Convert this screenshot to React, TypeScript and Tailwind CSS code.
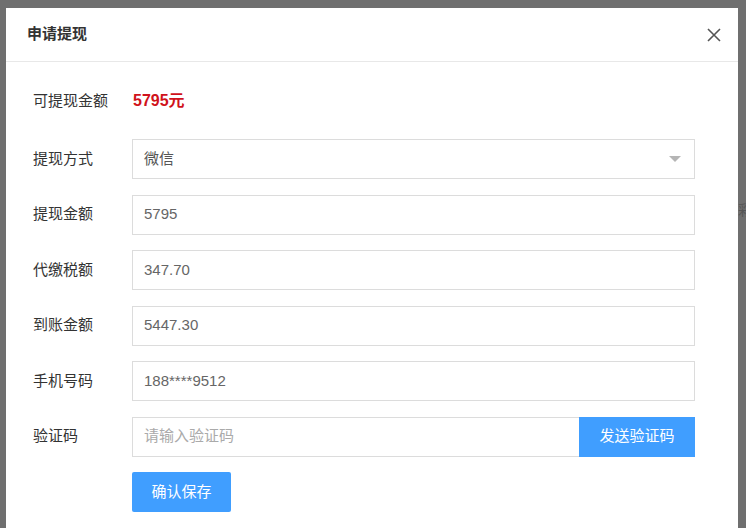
import React from "react";

const font = { fontFamily: '"Liberation Sans", "Noto Sans CJK SC", sans-serif' };

function Row({ label, children }: { label: string; children: React.ReactNode }) {
  return (
    <div className="flex items-center h-[40px]">
      <div className="w-[99px] shrink-0 text-[15px] text-[#333]">{label}</div>
      {children}
    </div>
  );
}

function Field({ value }: { value: string }) {
  return (
    <div className="w-[563px] h-[40px] border border-[#dcdcdc] flex items-center pl-[11px] text-[15px] text-[#666]">
      {value}
    </div>
  );
}

export default function App() {
  return (
    <div className="w-[746px] h-[528px] bg-[#6f6f6f] overflow-hidden pt-[8px] pl-[6px] relative" style={font}>
      <div className="absolute left-[738px] top-[200px] text-[14px] text-[#555]">彩</div>
      <div className="w-[732px] h-[600px] bg-white flex flex-col relative">
        <div className="h-[54px] border-b border-[#e8e8e8] flex items-center justify-between pl-[21px] pr-[16px]">
          <div className="text-[15px] font-bold text-[#333]">申请提现</div>
          <svg width="14" height="14" viewBox="0 0 14 14" className="mr-[1px]">
            <path d="M1 1L13 13M13 1L1 13" stroke="#555" strokeWidth="1.6" />
          </svg>
        </div>
        <div className="pl-[27px] pt-[19px] flex flex-col">
          <Row label="可提现金额">
            <div className="text-[16px] font-bold text-[#d0121b] -ml-[-1px]">5795元</div>
          </Row>
          <div className="flex flex-col gap-[15.5px] mt-[18px]">
            <Row label="提现方式">
              <div className="w-[563px] h-[40px] border border-[#dcdcdc] flex items-center justify-between pl-[11px] pr-[13px] text-[15px] text-[#555]">
                <span>微信</span>
                <svg width="12" height="6" viewBox="0 0 12 6">
                  <path d="M0 0H12L6 6Z" fill="#b5b5b5" />
                </svg>
              </div>
            </Row>
            <Row label="提现金额">
              <Field value="5795" />
            </Row>
            <Row label="代缴税额">
              <Field value="347.70" />
            </Row>
            <Row label="到账金额">
              <Field value="5447.30" />
            </Row>
            <Row label="手机号码">
              <Field value="188****9512" />
            </Row>
            <Row label="验证码">
              <div className="w-[563px] h-[40px] flex">
                <div className="flex-1 border border-[#dcdcdc] border-r-0 flex items-center pl-[11px] text-[15px] text-[#aaa]">
                  请输入验证码
                </div>
                <div className="w-[116px] h-[40px] bg-[#409eff] text-white text-[15px] flex items-center justify-center">
                  发送验证码
                </div>
              </div>
            </Row>
            <div className="flex h-[40px]">
              <div className="w-[99px] shrink-0" />
              <div className="w-[99px] h-[40px] rounded-[2px] bg-[#409eff] text-white text-[15px] flex items-center justify-center">
                确认保存
              </div>
            </div>
          </div>
        </div>
      </div>
    </div>
  );
}
